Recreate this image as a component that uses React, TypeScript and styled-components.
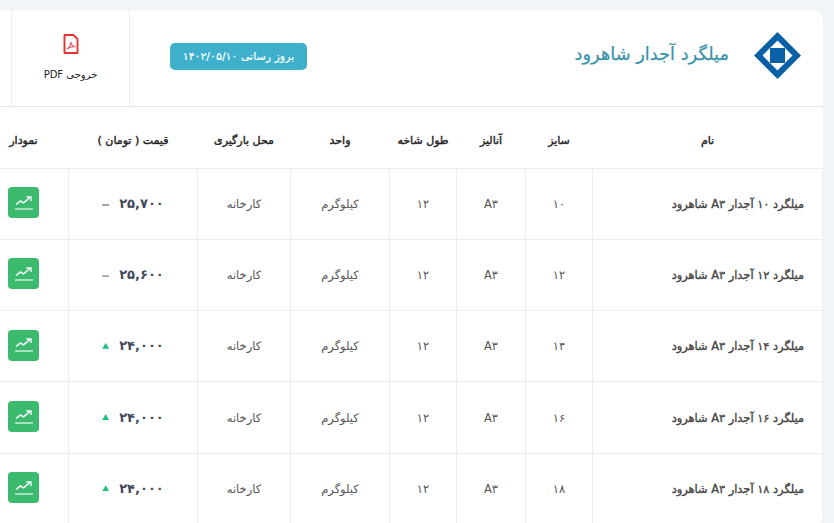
import React, { FC } from 'react';
import styled, { createGlobalStyle } from 'styled-components';

const GlobalStyle = createGlobalStyle`
  html, body {
    margin: 0;
    padding: 0;
    background: #f1f5f9;
    overflow: hidden;
  }
  body {
    font-family: 'DejaVu Sans', 'Noto Sans', sans-serif;
  }
`;

const Page = styled.div`
  width: 834px;
  height: 523px;
  overflow: hidden;
  padding-top: 10px;
  box-sizing: border-box;
`;

const Card = styled.section`
  width: 844px;
  margin-left: -21px;
  background: #fff;
  border-radius: 10px;
  direction: rtl;
  overflow: hidden;
`;

const Header = styled.header`
  display: flex;
  align-items: center;
  height: 96px;
  padding-right: 22px;
  border-bottom: 1px solid #e5e7eb;
`;

const Logo = styled.svg`
  flex-shrink: 0;
  margin-bottom: 6px;
`;

const Title = styled.h1`
  margin: 0 25px 10px 0;
  font-size: 17.8px;
  font-weight: 400;
  -webkit-text-stroke: 0.25px #3a93ab;
  color: #3a93ab;
  white-space: nowrap;
`;

const Badge = styled.div`
  margin: 0 auto 4px 40px;
  height: 27px;
  width: 137px;
  display: flex;
  align-items: center;
  justify-content: center;
  border-radius: 5px;
  background: #3fb0cc;
  color: #fff;
  font-size: 11px;
  -webkit-text-stroke: 0.2px #fff;
  white-space: nowrap;
`;

const ExportCell = styled.div`
  width: 119px;
  height: 96px;
  margin-left: 32px;
  padding-bottom: 2px;
  box-sizing: border-box;
  display: flex;
  flex-direction: column;
  align-items: center;
  justify-content: center;
  gap: 15px;
  border-left: 1px solid #ececec;
  border-right: 1px solid #ececec;
  font-size: 10px;
  color: #222;
`;

const Table = styled.table`
  width: 844px;
  border-collapse: collapse;
  table-layout: fixed;
`;

const Th = styled.th`
  height: 61px;
  padding: 6px 0 0;
  box-sizing: border-box;
  font-size: 11px;
  font-weight: 400;
  -webkit-text-stroke: 0.4px #222;
  color: #222;
  text-align: center;
  border-bottom: 1px solid #e9eef2;
`;

const Td = styled.td`
  height: 70.3px;
  padding: 0;
  font-size: 11.5px;
  color: #555;
  text-align: center;
  border: 1px solid #e9eef2;
  border-top: 0;
  white-space: nowrap;
`;

const NameCell = styled(Td)`
  text-align: right;
  padding-right: 18px;
  font-size: 11.4px;
  -webkit-text-stroke: 0.35px #444;
  color: #444;
`;

const Price = styled.div`
  display: inline-flex;
  align-items: center;
  gap: 10px;
  margin-bottom: 1px;
  font-size: 13px;
  font-weight: 700;
  color: #3f4a5c;
`;

const Trend = styled.span<{ $up: boolean }>`
  width: 7px;
  height: 6px;
  display: inline-block;
  background: ${(p) => (p.$up ? '#1ec27a' : '#9ca3af')};
  clip-path: ${(p) =>
    p.$up
      ? 'polygon(50% 0, 100% 100%, 0 100%)'
      : 'polygon(0 65%, 100% 65%, 100% 100%, 0 100%)'};
`;

const ChartButton = styled.button`
  width: 31px;
  height: 31px;
  margin-bottom: 2px;
  padding: 0;
  display: inline-flex;
  align-items: center;
  justify-content: center;
  border: 0;
  border-radius: 4px;
  background: #3cbb6f;
  cursor: pointer;
`;

const LogoMark: FC = () => (
  <Logo width="47" height="47" viewBox="0 0 47 47">
    <path d="M23.5 0 47 23.5 23.5 47 0 23.5Z" fill="#0a60a6" />
    <path d="M23.5 8.5 38.5 23.5 23.5 38.5 8.5 23.5Z" fill="#fff" />
    <rect x="16" y="16" width="15" height="15" fill="#0a60a6" />
  </Logo>
);

const PdfIcon: FC = () => (
  <svg width="16" height="20" viewBox="0 0 16 20" fill="none">
    <path
      d="M1.500 1h9L14.500 5V19H1.500Z"
      stroke="#e2342f"
      strokeWidth="1.900"
      strokeLinejoin="round"
    />
    <path
      d="M4 15c2.500-1.500 3.500-3.800 3.900-7 .6 2.800 2 4.300 4.300 4.700-2.800-.2-5.700.5-8.200 2.300Z"
      stroke="#ea5a6a"
      strokeWidth="1.100"
      strokeLinejoin="round"
    />
  </svg>
);

const ChartIcon: FC = () => (
  <svg width="18" height="14" viewBox="0 0 18 14" fill="none">
    <path d="M1 8.500 5.500 5 8.500 6.800 15 1.500" stroke="#fff" strokeWidth="1.500" />
    <path d="M11.500 1h4.500v4" stroke="#fff" strokeWidth="1.300" />
    <path d="M0 13h18" stroke="#fff" strokeWidth="1.100" />
  </svg>
);

const rows = [
  { size: '۱۰', price: '۲۵,۷۰۰', up: false },
  { size: '۱۲', price: '۲۵,۶۰۰', up: false },
  { size: '۱۴', price: '۲۴,۰۰۰', up: true },
  { size: '۱۶', price: '۲۴,۰۰۰', up: true },
  { size: '۱۸', price: '۲۴,۰۰۰', up: true },
];

const colWidths = [230, 67, 69, 67, 99, 93, 129, 90];
const heads = ['نام', 'سایز', 'آنالیز', 'طول شاخه', 'واحد', 'محل بارگیری', 'قیمت ( تومان )', 'نمودار'];

const App: FC = () => (
  <Page>
    <GlobalStyle />
    <Card>
      <Header>
        <LogoMark />
        <Title>میلگرد آجدار شاهرود</Title>
        <Badge>بروز رسانی ۱۴۰۲/۰۵/۱۰</Badge>
        <ExportCell>
          <PdfIcon />
          <span>خروجی PDF</span>
        </ExportCell>
      </Header>
      <Table>
        <colgroup>
          {colWidths.map((w, i) => (
            <col key={i} width={w} />
          ))}
        </colgroup>
        <thead>
          <tr>
            {heads.map((h) => (
              <Th key={h}>{h}</Th>
            ))}
          </tr>
        </thead>
        <tbody>
          {rows.map((r) => (
            <tr key={r.size}>
              <NameCell>میلگرد {r.size} آجدار A۳ شاهرود</NameCell>
              <Td>{r.size}</Td>
              <Td>A۳</Td>
              <Td>۱۲</Td>
              <Td>کیلوگرم</Td>
              <Td>کارخانه</Td>
              <Td>
                <Price>
                  <span>{r.price}</span>
                  <Trend $up={r.up} />
                </Price>
              </Td>
              <Td>
                <ChartButton aria-label="نمودار">
                  <ChartIcon />
                </ChartButton>
              </Td>
            </tr>
          ))}
        </tbody>
      </Table>
    </Card>
  </Page>
);

export default App;
